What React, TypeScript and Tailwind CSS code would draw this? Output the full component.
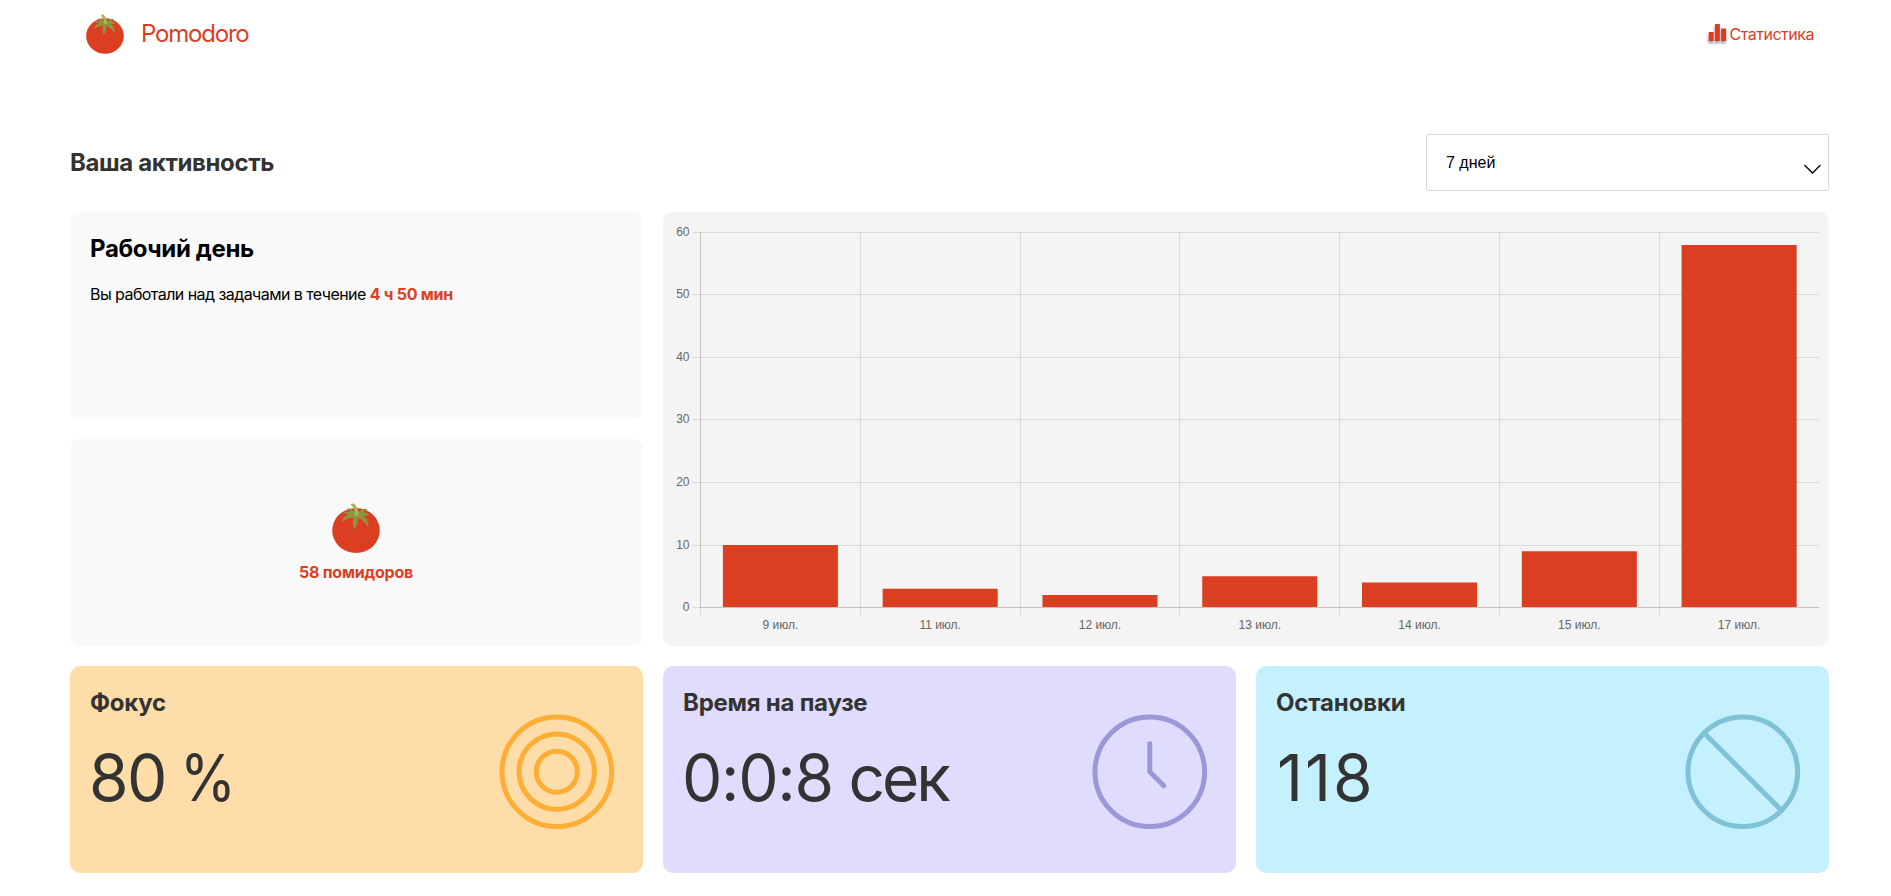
import type { ReactNode } from "react";

const DAYS = [
  { label: "9 июл.", value: 10 },
  { label: "11 июл.", value: 3 },
  { label: "12 июл.", value: 2 },
  { label: "13 июл.", value: 5 },
  { label: "14 июл.", value: 4 },
  { label: "15 июл.", value: 9 },
  { label: "17 июл.", value: 58 },
];

function Tomato({ className }: { className: string }) {
  return (
    <svg viewBox="0 0 48 50" className={className}>
      <ellipse cx="24" cy="27.5" rx="23.8" ry="22.500" fill="#DC3E22" />
      <path
        d="M22 8.500C20 6 17.500 5.200 15 5.700c1.500.6 2.500 1.300 3.300 2.500C15.500 8 12.500 8.700 10.500 10.500c2.500-.2 4.500 0 6.500.8C13 12.500 10.500 15 10.300 19c3.200-3 7-4.300 11.200-4.500-.8 4-.8 8 .8 12 2.500-3.500 3.700-7.300 3.700-11.500 4.500 1.500 7.500 5 10.300 9.500.7-5-1.300-9-4.800-11.500 2.300-.8 4.200-1 6-.8-1.500-2-3.500-3-6-3 1.200-1.300 2.500-2.200 4.300-2.700C32.500 5 29.500 6 27.500 8.500z"
        fill="#8C9440"
      />
      <path d="M18.500 1.500 21.500.2c3.500 2.600 5 6.500 5 11.600-1 .9-2.800.9-3.800.1C22.900 7.500 21.700 4.300 18.500 1.500z" fill="#A8B64F" />
    </svg>
  );
}

function StatIcon() {
  return (
    <svg width="24" height="24" viewBox="0 0 24 24">
      <defs>
        <filter id="icon-shadow" x="-20%" y="-20%" width="140%" height="150%">
          <feDropShadow dx="-0.500" dy="2.500" stdDeviation="1.200" floodColor="#000" floodOpacity="0.350" />
        </filter>
      </defs>
      <g fill="#DC3E22" filter="url(#icon-shadow)">
        <rect x="2.700" y="10" width="5" height="9" />
        <rect x="8.900" y="2" width="5" height="17" />
        <rect x="15.100" y="6.500" width="5" height="12.500" />
      </g>
    </svg>
  );
}

function Chart() {
  const left = 37.5;
  const right = 1156;
  const top = 20.5;
  const bottom = 395.5;
  const step = (right - left) / DAYS.length;
  const scale = (bottom - top) / 60;
  const snap = (n: number) => Math.floor(n) + 0.5;
  return (
    <svg width="1166" height="434" className="block font-['Liberation_Sans',sans-serif] text-[12px]">
      {[0, 10, 20, 30, 40, 50, 60].map((v) => {
        const y = snap(395.92 - v * 6.265);
        return (
          <g key={v}>
            <line x1="29" x2={right} y1={y} y2={y} stroke="#000" strokeOpacity="0.1" />
            <text x="26.5" y={y + 3.5} textAnchor="end" fill="#666">
              {v}
            </text>
          </g>
        );
      })}
      {DAYS.map((d, i) => {
        const x = snap(left + i * step);
        return <line key={d.label} x1={x} x2={x} y1="20" y2="404" stroke="#000" strokeOpacity="0.1" />;
      })}
      <line x1={left} x2={left} y1="20" y2="396" stroke="#000" strokeOpacity="0.1" />
      <line x1={left} x2={right} y1={bottom} y2={bottom} stroke="#000" strokeOpacity="0.1" />
      {DAYS.map((d, i) => {
        const center = left + (i + 0.5) * step;
        return (
          <g key={d.label}>
            <rect x={center - step * 0.36} y={bottom - d.value * scale} width={step * 0.72} height={d.value * scale - 0.5} fill="#DC3E22" />
            <text x={center} y="417" textAnchor="middle" fill="#666">
              {d.label}
            </text>
          </g>
        );
      })}
    </svg>
  );
}

function MetricCard({ className, title, value, children }: { className: string; title: ReactNode; value: ReactNode; children: ReactNode }) {
  return (
    <div className={`flex items-center justify-between rounded-[10px] pr-[29px] pl-5 text-[#333] ${className}`}>
      <div className="flex h-full flex-col pt-5">
        <h3 className="text-[24px] leading-[33px] font-bold">{title}</h3>
        <p className="mt-[21px] text-[64px] leading-[76px]">{value}</p>
      </div>
      <svg width="115" height="115" viewBox="0 0 115 115" fill="none" strokeWidth="5" className="mt-1">
        <g transform="translate(0.3 0.2)">{children}</g>
      </svg>
    </div>
  );
}

export default function App() {
  return (
    <div className="min-h-[896px] bg-white pr-[62px] pl-[70px] font-['Inter',sans-serif] text-[16px] text-black">
      <header className="flex h-[68px] items-center justify-between pr-[15px] pl-4 text-[#DC3E22]">
        <div className="flex items-center">
          <Tomato className="h-[40px] w-[38px]" />
          <span className="ml-[17px] text-[24px] font-normal tracking-[-1.2px]">Pomodoro</span>
        </div>
        <div className="flex items-center">
          <StatIcon />
          <span className="tracking-[-0.48px]">Статистика</span>
        </div>
      </header>

      <main>
        <div className="mt-[66px] flex items-center justify-between">
          <h2 className="text-[24px] font-bold tracking-[-0.37px] text-[#333]">Ваша активность</h2>
          <div className="flex h-[57px] w-[403px] items-center justify-between rounded-[2px] border border-[#DADADA] pr-[7px] pl-[19px]">
            <span className="font-['Liberation_Sans',sans-serif]">7 дней</span>
            <svg width="18" height="11" viewBox="0 0 18 11" fill="none" stroke="#000" className="mt-[13px]">
              <path d="M1.500 1l8 8 8-8" strokeWidth="1.300" />
            </svg>
          </div>
        </div>

        <div className="mt-[21px] grid grid-cols-3 grid-rows-[207px_207px_207px] gap-5">
          <div className="rounded-[10px] bg-[#F9F9F9] px-5 pt-5">
            <h3 className="text-[24px] leading-[33px] font-bold tracking-[-0.37px]">Рабочий день</h3>
            <p className="mt-[15px] leading-[28px] tracking-[-0.56px]">
              Вы работали над задачами в течение <b className="tracking-[-0.25px] text-[#DC3E22]">4 ч 50 мин</b>
            </p>
          </div>
          <div className="col-span-2 row-span-2 overflow-hidden rounded-[10px] bg-[#F4F4F4]">
            <Chart />
          </div>
          <div className="flex flex-col items-center rounded-[10px] bg-[#F9F9F9] pt-[64px] pr-px">
            <Tomato className="h-[50px] w-[48px]" />
            <b className="mt-[7px] leading-[24px] tracking-[-0.2px] text-[#DC3E22]">58 помидоров</b>
          </div>
          <MetricCard
            className="bg-[#FFDDA9]"
            title={<span className="tracking-[-0.25px]">Фокус</span>}
            value={
              <span className="-ml-px tracking-[-1.5px]">
                80 <span className="-ml-0.5 inline-block origin-left scale-x-[0.89]">%</span>
              </span>
            }
          >
            <g stroke="#FFAE35">
              <circle cx="57.500" cy="57.500" r="54.800" />
              <circle cx="57.500" cy="57.500" r="37.700" />
              <circle cx="57.500" cy="57.500" r="20.500" />
            </g>
          </MetricCard>
          <MetricCard
            className="bg-[#DFDCFD]"
            title={<span className="tracking-[-0.25px]">Время на паузе</span>}
            value={
              <span className="-ml-px tracking-[-1.3px]">
                0:0:8 <span className="-ml-px tracking-[-3px]">сек</span>
              </span>
            }
          >
            <g stroke="#9C97D7" strokeLinecap="round" strokeLinejoin="round">
              <circle cx="57.500" cy="57.500" r="54.800" />
              <path d="M57.500 29.500v28l14 14" />
            </g>
          </MetricCard>
          <MetricCard
            className="bg-[#C5F1FF]"
            title={<span className="tracking-[-0.15px]">Остановки</span>}
            value={<span className="ml-px tracking-[2px]">118</span>}
          >
            <g stroke="#7FC2D7">
              <circle cx="57.500" cy="57.500" r="54.800" />
              <path d="M19.500 19.500l76 76" />
            </g>
          </MetricCard>
        </div>
      </main>
    </div>
  );
}
